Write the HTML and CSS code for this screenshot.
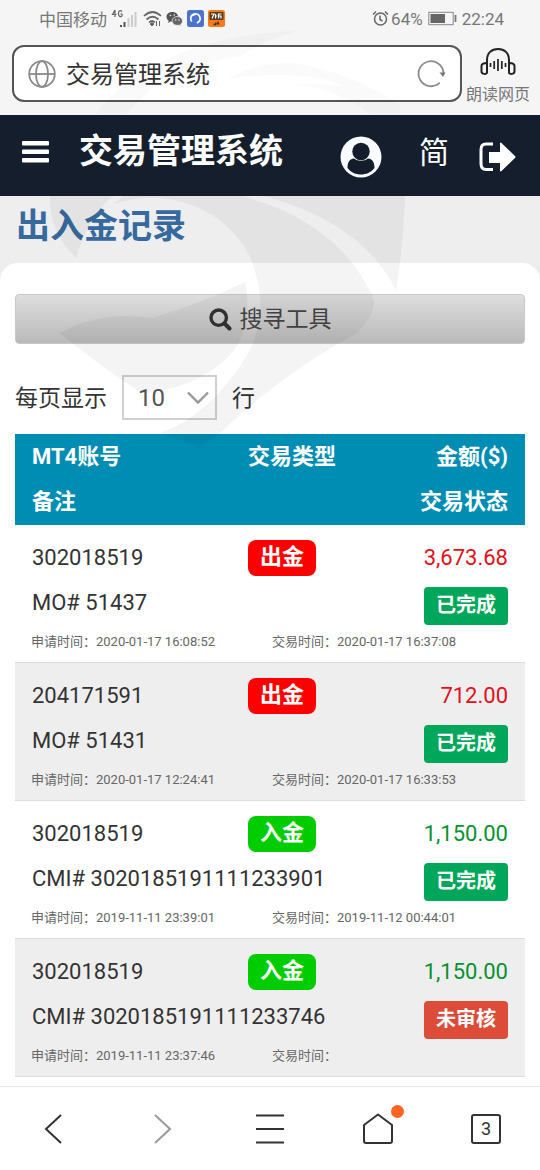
FILE: index.html
```html
<!DOCTYPE html>
<html lang="zh-CN">
<head>
<meta charset="utf-8">
<meta name="viewport" content="width=device-width, initial-scale=1">
<title>交易管理系统</title>
<link rel="stylesheet" href="styles.css">
</head>
<body>
<div class="status-bar">
  <div class="status-group">
    <span>中国移动</span>
    <svg width="28" height="20" viewBox="0 0 28 20" aria-hidden="true">
      <path d="M4 1 1.500 5.500H5.500M4 1V8M11 2.500C9 .5 7.500 2 7.500 4.500S9 8.500 11 7V5H9.500" fill="none" stroke="#666" stroke-width="1.200"/>
      <path d="M10 16v2M13.500 13v5" stroke="#555" stroke-width="2"/>
      <path d="M17.500 9v9M21 6v12M24.500 3v15" stroke="#ccc" stroke-width="2"/>
    </svg>
    <svg width="19" height="18" viewBox="0 0 19 18" aria-hidden="true">
      <g fill="none" stroke="#666" stroke-width="1.700"><path d="M1 6Q9.500-2 18 6M3.500 9.500Q9.500 4 15.500 9.500M6 12.500Q9 9.500 12 12.500"/></g>
      <path d="M7 14l2-1.500 2 1.500-2 2zM13.500 11v5M16.500 11v5" fill="#666" stroke="#666"/>
    </svg>
    <svg width="17" height="16" viewBox="0 0 17 16" aria-hidden="true">
      <path d="M6.500 1C3 1 .5 3 .5 5.800c0 1.700.8 3 2.200 3.900L2 12l2.500-1.400 2 .3z" fill="#555"/>
      <path d="M6 1c3.500 0 6 2 6 4.800S9 11 6 11z" fill="#555"/>
      <path d="M11.300 5.500c3 0 5.200 1.900 5.200 4.400 0 1.400-.7 2.600-1.900 3.400l.5 1.900-2.100-1.100c-3.800.8-6.900-1.200-6.900-4.200 0-2.500 2.200-4.400 5.200-4.400z" fill="#666" stroke="#f5f5f5" stroke-width=".7"/>
      <circle cx="4.500" cy="4.500" r=".8" fill="#f5f5f5"/><circle cx="8.200" cy="4" r=".8" fill="#f5f5f5"/><circle cx="9.700" cy="9" r=".7" fill="#f5f5f5"/><circle cx="13" cy="9" r=".7" fill="#f5f5f5"/>
    </svg>
    <svg width="17" height="17" viewBox="0 0 17 17" aria-hidden="true">
      <rect width="17" height="17" rx="2.500" fill="#4a74d0"/>
      <path d="M4.800 11.500a4.700 4.700 0 1 1 5 1.500M9 4l-5 2" fill="none" stroke="#fff" stroke-width="1.700"/><circle cx="8.500" cy="8.500" r="2.200" fill="#4a74d0"/>
    </svg>
    <svg width="17" height="17" viewBox="0 0 17 17" aria-hidden="true">
      <rect width="17" height="17" rx="2.500" fill="#f47a1c"/>
      <rect x="1.500" y="2" width="14" height="8" rx="1" fill="#5a3b24"/>
      <path d="M3 4h3L4 8.500M7.500 4v4.500M7 6h2M10.500 8.500V4h3M10.500 6h3M13 6v2.500" fill="none" stroke="#fff" stroke-width="1.200"/>
      <path d="M5.500 14.500h2l.5-2M9 14.500l1-2 1 2" fill="none" stroke="#4b2c12" stroke-width="1.300"/>
    </svg>
  </div>
  <div class="status-group status-right">
    <svg width="17" height="17" viewBox="0 0 17 17" fill="none" stroke="#666" stroke-width="1.500" aria-hidden="true">
      <circle cx="8.500" cy="9" r="6"/><path d="M8 5.500V9.500l2.500 1.500M1 4.500 4 1.500M16 4.500 13 1.500"/>
    </svg>
    <span>64%</span>
    <svg class="battery" width="29" height="15" viewBox="0 0 29 15" aria-hidden="true">
      <rect x=".8" y="1.300" width="24.400" height="12.400" fill="none" stroke="#888"/>
      <rect x="2.500" y="3" width="14.500" height="9" fill="#666"/><path d="M27.500 4v7" stroke="#777" stroke-width="1.800"/>
    </svg>
    <span>22:24</span>
  </div>
</div>

<div class="browser-bar">
  <div class="address">
    <svg width="28" height="28" viewBox="0 0 28 28" fill="none" stroke="#8a8a8a" stroke-width="1.800" aria-hidden="true">
      <circle cx="14" cy="14" r="12.800"/><ellipse cx="14" cy="14" rx="6" ry="12.800"/><path d="M1 14h26"/>
    </svg>
    <input class="address-input" type="text" value="交易管理系统" aria-label="地址栏">
    <button class="icon-button" type="button" aria-label="刷新">
      <svg width="30" height="30" viewBox="0 0 30 30" aria-hidden="true">
        <path d="M23.700 23.700A12.500 12.500 0 1 1 27.500 14" fill="none" stroke="#8c8c8c" stroke-width="1.800"/><path d="M23.500 13.500h6L27 18z" fill="#777"/>
      </svg>
    </button>
  </div>
  <button class="read-button" type="button">
    <svg width="36" height="30" viewBox="0 0 36 30" fill="none" stroke="#222" stroke-width="2" aria-hidden="true">
      <path d="M7 17v-4C7 6 11.500 2 18 2s11 4 11 11v4"/>
      <path d="M7 16v9.500c0 2-5.500 2-5.500-1V19c0-2 2.500-3 5.500-3zM29 16v9.500c0 2 5.500 2 5.500-1V19c0-2-2.500-3-5.500-3z"/>
      <path d="M10.500 16v4M14.200 14v8M18 12v12M21.800 14v8M25.500 16v4" stroke-width="1.700"/>
    </svg>
    <span>朗读网页</span>
  </button>
</div>

<header class="app-header">
  <button class="icon-button" type="button" aria-label="菜单">
    <svg width="27" height="24" viewBox="0 0 27 24" fill="#fff" aria-hidden="true"><rect y="1" width="27" height="4.500" rx="1"/><rect y="9.500" width="27" height="4.500" rx="1"/><rect y="18" width="27" height="4.500" rx="1"/></svg>
  </button>
  <h1 class="app-title">交易管理系统</h1>
  <div class="app-actions">
    <button class="icon-button drop" type="button" aria-label="用户">
      <svg width="42" height="42" viewBox="0 0 42 42" aria-hidden="true">
        <circle cx="21" cy="21" r="20.500" fill="#f8fbff"/><circle cx="21" cy="15.500" r="8.700" fill="#141d2b"/>
        <path d="M7.500 32C7.500 26 10 22.500 14 22.500c4 3 10 3 14 0 4 0 6.500 3.500 6.500 9.500-3.500 4.500-8.500 6.500-13.500 6.500S11 36.500 7.500 32z" fill="#141d2b"/>
      </svg>
    </button>
    <button class="lang-button" type="button">简</button>
    <button class="icon-button drop" type="button" aria-label="退出">
      <svg width="38" height="32" viewBox="0 0 38 32" aria-hidden="true">
        <path d="M15 3H8Q3 3 3 8.500v14Q3 28.500 8 28.500h7" fill="none" stroke="#fff" stroke-width="3"/>
        <path d="M11 11h11V2.500q0-1.500 1.500-.5L37 15q1 1 0 2L23.500 30q-1.500 1-1.500-.5V22H11z" fill="#fff"/>
      </svg>
    </button>
  </div>
</header>

<main class="page">
  <h2 class="page-title">出入金记录</h2>
  <section class="panel">
    <button class="search-button" type="button">
      <svg width="23" height="23" viewBox="0 0 23 23" fill="none" stroke="#333" aria-hidden="true"><circle cx="9.700" cy="9.700" r="7.700" stroke-width="3.400"/><path d="m15.500 15.500 5 5" stroke-width="4" stroke-linecap="round"/></svg>
      <span class="search-label">搜寻工具</span>
    </button>
    <div class="page-size">
      <label class="size-label" for="size">每页显示</label>
      <span class="select-box">
        <select id="size"><option>10</option><option>25</option><option>50</option></select>
        <svg class="select-arrow" width="22" height="14" viewBox="0 0 22 14" fill="none" stroke="#999" stroke-width="2.400" aria-hidden="true"><path d="m1 1.500 10 10 10-10"/></svg>
      </span>
      <span class="size-label">行</span>
    </div>

    <table class="records">
      <colgroup><col class="col-account"><col class="col-type"><col class="col-amount"></colgroup>
      <thead>
        <tr><th scope="col">MT4账号</th><th scope="col">交易类型</th><th scope="col" class="end">金额($)</th></tr>
        <tr class="head-last"><th scope="col" colspan="2">备注</th><th scope="col" class="end">交易状态</th></tr>
      </thead>
      <tbody>
        <tr class="main-row"><td>302018519</td><td><span class="type out">出金</span></td><td class="end red">3,673.68</td></tr>
        <tr class="note-row"><td colspan="2">MO# 51437</td><td class="end"><span class="state done">已完成</span></td></tr>
        <tr class="time-row"><td colspan="3"><div class="times"><span>申请时间：2020-01-17 16:08:52</span><span>交易时间：2020-01-17 16:37:08</span></div></td></tr>
      </tbody>
      <tbody>
        <tr class="main-row"><td>204171591</td><td><span class="type out">出金</span></td><td class="end red">712.00</td></tr>
        <tr class="note-row"><td colspan="2">MO# 51431</td><td class="end"><span class="state done">已完成</span></td></tr>
        <tr class="time-row"><td colspan="3"><div class="times"><span>申请时间：2020-01-17 12:24:41</span><span>交易时间：2020-01-17 16:33:53</span></div></td></tr>
      </tbody>
      <tbody>
        <tr class="main-row"><td>302018519</td><td><span class="type in">入金</span></td><td class="end green">1,150.00</td></tr>
        <tr class="note-row"><td colspan="2">CMI# 3020185191111233901</td><td class="end"><span class="state done">已完成</span></td></tr>
        <tr class="time-row"><td colspan="3"><div class="times"><span>申请时间：2019-11-11 23:39:01</span><span>交易时间：2019-11-12 00:44:01</span></div></td></tr>
      </tbody>
      <tbody>
        <tr class="main-row"><td>302018519</td><td><span class="type in">入金</span></td><td class="end green">1,150.00</td></tr>
        <tr class="note-row"><td colspan="2">CMI# 3020185191111233746</td><td class="end"><span class="state pending">未审核</span></td></tr>
        <tr class="time-row"><td colspan="3"><div class="times"><span>申请时间：2019-11-11 23:37:46</span><span>交易时间：</span></div></td></tr>
      </tbody>
    </table>
  </section>
</main>

<nav class="bottom-nav" aria-label="浏览器">
  <button type="button" aria-label="后退"><svg width="32" height="32" viewBox="0 0 32 32" fill="none" stroke="#333" stroke-width="2"><path d="M23 2 8 16l15 14"/></svg></button>
  <button type="button" aria-label="前进"><svg width="32" height="32" viewBox="0 0 32 32" fill="none" stroke="#999" stroke-width="2"><path d="m9 2 15 14L9 30"/></svg></button>
  <button type="button" aria-label="菜单"><svg width="32" height="32" viewBox="0 0 32 32" fill="none" stroke="#333" stroke-width="2"><path d="M2 2.500h28M2 16h28M2 29.500h28"/></svg></button>
  <button type="button" aria-label="主页"><svg width="32" height="32" viewBox="0 0 32 32" fill="none" stroke="#333" stroke-width="2" stroke-linejoin="round"><path d="M16 1.500 2 12v16q0 2 2 2h24q2 0 2-2V12z"/></svg><span class="dot"></span></button>
  <button type="button" aria-label="标签页 3"><span class="tab-count">3</span></button>
</nav>

<svg class="watermark" width="540" height="460" viewBox="0 0 540 460" aria-hidden="true">
  <g fill-opacity=".45">
    <path d="M96 114C130 66 205 35 296 31Q262 41 240 56 165 66 126 114Z"/>
    <path d="M228 79Q262 60 300 64 352 74 400 104V114H370Q340 90 296 84 330 84 345 86 300 68 228 79Z"/>
  </g>
  <path d="M50 195H114Q88 216 76 258 48 230 50 195Z"/>
  <path d="M260 195H405Q403 250 396 290C374 246 330 213 260 195Z"/>
  <path d="M114 204C180 182 238 222 252 262 271 315 258 350 217 395Q190 423 160 433L200 447Q210 440 218 435 280 375 355 334 374 318 374 300C356 258 322 225 270 205L240 195H124Z"/>
  <path d="M60 333Q100 310 152 318 200 304 245 282C252 315 244 342 228 357Q195 389 142 393 105 370 60 333Z"/>
</svg>
</body>
</html>
```
FILE: styles.css
```css
* {
  box-sizing: border-box;
}

body {
  position: relative;
  display: flex;
  flex-direction: column;
  min-height: 100vh;
  margin: 0;
  background: #fff;
  color: #333;
  font-family: Roboto, "Noto Sans CJK SC", sans-serif;
  font-size: 22px;
}

button,
input,
select {
  margin: 0;
  padding: 0;
  border: 0;
  background: none;
  color: inherit;
  font: inherit;
}

svg {
  display: block;
  flex: none;
}

.status-bar {
  display: flex;
  justify-content: space-between;
  height: 37px;
  padding: 0 36px 0 39px;
  background: #f5f5f5;
  color: #777;
  font-size: 17px;
}

.status-group {
  display: flex;
  align-items: center;
  gap: 4px;
}

.status-right {
  gap: 2px;
}

.battery {
  margin: 0 3px;
}

.browser-bar {
  display: flex;
  align-items: flex-start;
  gap: 2px;
  padding: 8px 8px 8px 12px;
  background: #f5f5f5;
}

.address {
  display: flex;
  flex: 1;
  align-items: center;
  gap: 10px;
  height: 57px;
  padding: 0 14px;
  border: 2px solid #555;
  border-radius: 12px;
  background: #fff;
}

.address-input {
  flex: 1;
  min-width: 0;
  padding-top: 2px;
  font-size: 24px;
  line-height: 36px;
  outline: none;
}

.read-button {
  display: flex;
  flex-direction: column;
  align-items: center;
  gap: 6px;
  width: 68px;
  padding-top: 2px;
  color: #777;
  font-size: 16px;
  line-height: 24px;
  white-space: nowrap;
}

.app-header {
  display: flex;
  align-items: center;
  height: 81px;
  padding: 0 24px 8px 22px;
  background: #151e2c;
  color: #fff;
}

.app-title {
  margin: 0 0 2px 30px;
  font-size: 34px;
  line-height: 48px;
}

.app-actions {
  display: flex;
  align-items: center;
  margin-left: auto;
}

.drop {
  padding-top: 10px;
}

.lang-button {
  margin: 0 29px 0 37px;
  padding-top: 2px;
  font-size: 30px;
  line-height: 40px;
}

.page {
  flex: 1;
  background: #eee;
}

.page-title {
  margin: 0;
  padding: 5px 16px 12px;
  color: #366a9e;
  font-size: 34px;
  line-height: 50px;
}

.panel {
  padding: 31px 15px 9px;
  border-radius: 18px 18px 0 0;
  background: #fff;
}

.search-button {
  display: flex;
  align-items: center;
  justify-content: center;
  gap: 8px;
  width: 100%;
  height: 50px;
  border: 1px solid #c8c8c8;
  border-radius: 4px;
  background: linear-gradient(#dedede, #b9b9b9);
  color: #444;
  font-size: 23px;
}

.search-label,
.size-label {
  padding-bottom: 4px;
}

.page-size {
  display: flex;
  align-items: center;
  gap: 15px;
  height: 45px;
  margin: 31px 0 14px;
  font-size: 23px;
}

.select-box {
  position: relative;
}

.select-box select {
  display: block;
  width: 95px;
  height: 45px;
  padding-left: 14px;
  border: 2px solid #d0d0d0;
  background: #fff;
  color: #555;
  font-size: 24px;
  appearance: none;
}

.select-arrow {
  position: absolute;
  top: 16px;
  right: 8px;
  pointer-events: none;
}

.records {
  width: 100%;
  border-spacing: 0;
  table-layout: fixed;
}

.col-account {
  width: 216px;
}

.col-type {
  width: 25%;
}

.records th,
.records td {
  padding: 0 17px;
  text-align: left;
  line-height: 32px;
}

.records th {
  height: 45px;
  background: #008db3;
  color: #fff;
}

.records .head-last th {
  height: 46px;
}

.records tbody:nth-child(even) {
  background: #eee;
}

.records .main-row td {
  height: 55px;
  padding-top: 10px;
}

.records .note-row td {
  height: 45px;
}

.records .time-row td {
  height: 38px;
  padding: 0 16px 4px;
  border-bottom: 1px solid #ddd;
  color: #666;
  font-size: 13px;
  line-height: 20px;
}

.records .end {
  text-align: right;
}

.records .note-row .end {
  vertical-align: bottom;
}

.times {
  display: grid;
  grid-template-columns: 241px 1fr;
}

.type,
.state {
  display: block;
  width: fit-content;
  color: #fff;
  font-weight: 700;
}

.type {
  padding: 0 12px 2px;
  border-radius: 8px;
  line-height: 34px;
}

.state {
  margin-left: auto;
  padding: 0 12px 2px;
  border-radius: 4px;
  font-size: 20px;
  line-height: 36px;
}

.out {
  background: #f00;
}

.in {
  background: #00cc00;
}

.done {
  background: #00a65a;
}

.pending {
  background: #dd4b39;
}

.records .red {
  color: #e0101c;
}

.records .green {
  color: #07912f;
}

.bottom-nav {
  display: grid;
  grid-template-columns: repeat(5, 1fr);
  height: 84px;
  border-top: 1px solid #e5e5e5;
  background: #fff;
}

.bottom-nav button {
  position: relative;
  display: flex;
  align-items: center;
  justify-content: center;
}

.dot {
  position: absolute;
  top: 18px;
  left: calc(50% + 13px);
  width: 13px;
  height: 13px;
  border-radius: 50%;
  background: #ff6422;
}

.tab-count {
  width: 30px;
  height: 30px;
  border: 2px solid #333;
  border-radius: 3px;
  font-size: 18px;
  line-height: 26px;
}

.watermark {
  position: absolute;
  top: 0;
  left: 0;
  fill: #000;
  opacity: 0.04;
  pointer-events: none;
}
```
